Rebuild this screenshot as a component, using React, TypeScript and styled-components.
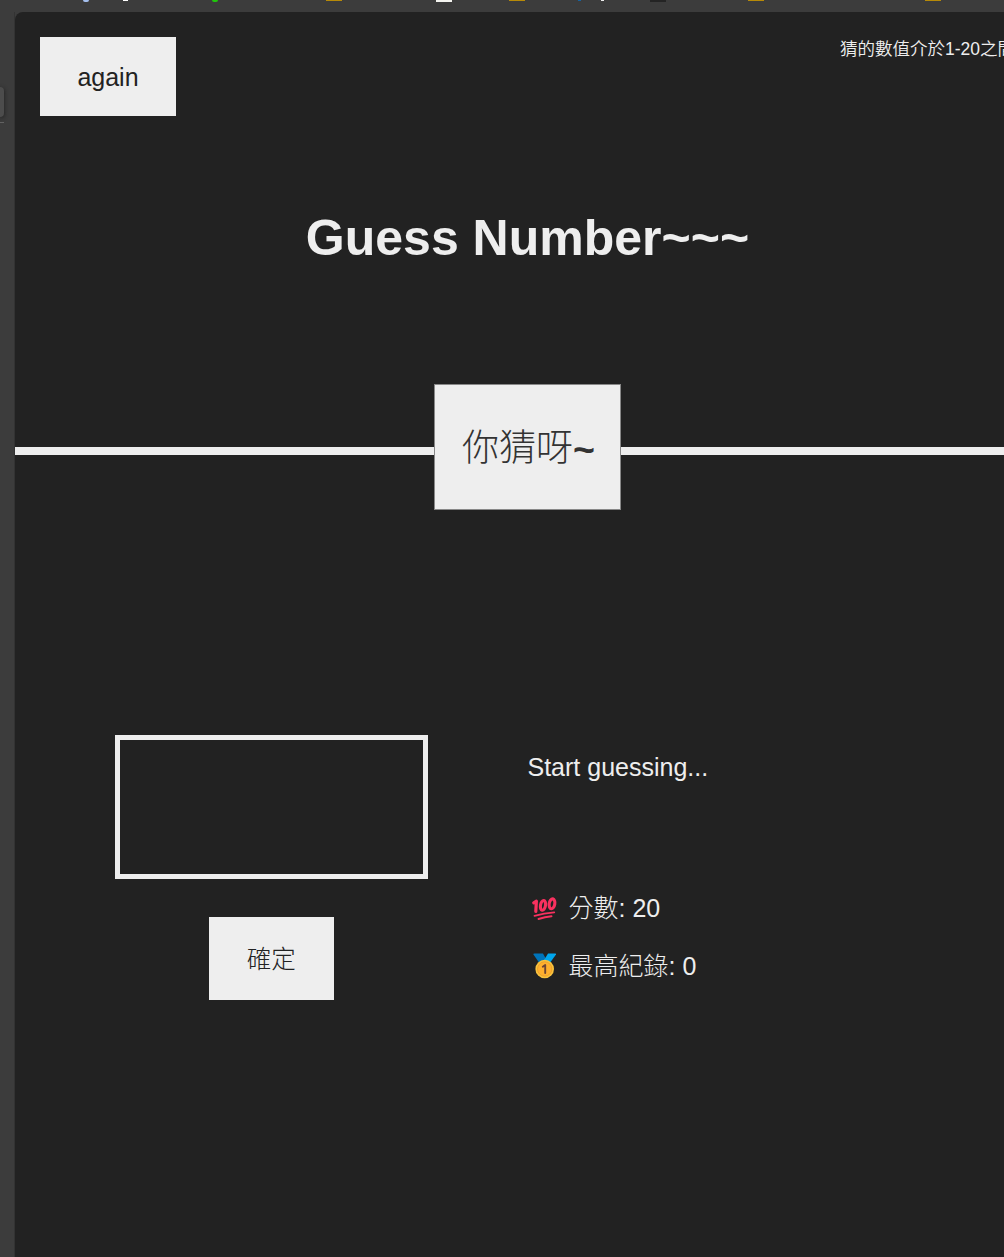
import React, { useState } from 'react';
import styled, { createGlobalStyle } from 'styled-components';

const GlobalStyle = createGlobalStyle`
  *, *::before, *::after { box-sizing: border-box; margin: 0; padding: 0; }
  html, body { overflow: hidden; background: #3c3c3c; }
  body { font-family: "Liberation Sans", Arial, "Noto Sans CJK TC", sans-serif; color: #eee; }
`;

const Browser = styled.div`
  display: grid;
  grid-template: 12px 1245px / 15px 1025px;
  width: 1004px;
  height: 1257px;
  overflow: hidden;
`;

const Bookmarks = styled.div`
  grid-column: 1 / -1;
  display: flex;
  align-items: flex-start;
`;

const Bookmark = styled.i<{ $gap: number; $w: number; $h: number; $color: string; $round?: boolean }>`
  flex: none;
  margin-left: ${(p) => p.$gap}px;
  width: ${(p) => p.$w}px;
  height: ${(p) => p.$h}px;
  background: ${(p) => p.$color};
  border-radius: ${(p) => (p.$round ? '0 0 3px 3px' : '0')};
`;

const Rail = styled.div`
  padding-top: 75px;
  border-right: 1px solid #333;
`;

const RailTab = styled.div`
  width: 4px;
  height: 30px;
  background: #4c4c4c;
  border-radius: 0 5px 5px 0;
  box-shadow: 0 1px 4px #1c1c1c;
`;

const RailLine = styled.div`
  width: 4px;
  height: 1px;
  margin-top: 5px;
  background: #626262;
`;

const Page = styled.div`
  display: flex;
  flex-direction: column;
  background: #222;
  border-top-left-radius: 8px;
`;

const Header = styled.header`
  display: flex;
  flex-direction: column;
  height: 443px;
  padding: 25px 25px 0;
  border-bottom: 8px solid #eee;
`;

const TopRow = styled.div`
  display: flex;
  justify-content: space-between;
  align-items: flex-start;
`;

const Button = styled.button<{ $w: number; $h: number; $pad: string; $size?: number }>`
  width: ${(p) => p.$w}px;
  height: ${(p) => p.$h}px;
  padding: ${(p) => p.$pad};
  border: none;
  background: #eee;
  color: #222;
  font-family: inherit;
  font-size: ${(p) => p.$size ?? 25}px;
  font-weight: 300;
  cursor: pointer;
`;

const Range = styled.p`
  padding-top: 2px;
  font-size: 17.5px;
  font-weight: 350;
  line-height: 20px;
  white-space: nowrap;
`;

const Title = styled.h1`
  margin-top: 93px;
  font-size: 50px;
  line-height: 58px;
  text-align: center;
`;

const Secret = styled.div`
  flex: none;
  align-self: center;
  display: flex;
  align-items: center;
  justify-content: center;
  width: 187px;
  height: 126px;
  margin-top: 117px;
  padding: 4px 0 0 2px;
  border: 1px solid #888;
  background: #eee;
  color: #333;
  font-size: 37px;
  font-weight: 300;
  line-height: 44px;
  b { font-size: 37.5px; font-weight: 700; }
`;

const Main = styled.main`
  display: grid;
  grid-template-columns: 1fr 1fr;
  padding-top: 280px;
`;

const Form = styled.section`
  display: flex;
  flex-direction: column;
  align-items: center;
  gap: 38px;
`;

const GuessInput = styled.input`
  width: 313px;
  height: 144px;
  border: 5px solid #eee;
  background: #222;
  color: #eee;
  font-family: inherit;
  font-size: 62px;
  text-align: center;
  outline: none;
`;

const Info = styled.section`
  display: flex;
  flex-direction: column;
  font-size: 25px;
  font-weight: 300;
  line-height: 30px;
`;

const Message = styled.p`
  padding-top: 17px;
  margin-bottom: 111px;
`;

const Stat = styled.p`
  display: flex;
  align-items: center;
  gap: 8px;
  margin-bottom: 28px;
  svg { flex: none; }
`;

const Hundred = () => (
  <svg width="33" height="30" viewBox="0 0 33 30" fill="none" stroke="#f8315f" strokeLinecap="round">
    <path d="M5.7 9.8 8.4 8.2 7.8 18.3" strokeWidth="3.2" strokeLinejoin="round" />
    <ellipse cx="15" cy="12.4" rx="2.5" ry="4.9" strokeWidth="3.1" transform="rotate(10 15 12.4)" />
    <ellipse cx="24" cy="10.8" rx="2.8" ry="5" strokeWidth="3.1" transform="rotate(10 24 10.8)" />
    <path d="M6.5 22.8Q16 20 26.2 19.4M10.5 26Q17 23.6 23.5 23.2" strokeWidth="1.9" />
  </svg>
);

const Medal = () => (
  <svg width="33" height="30" viewBox="0 0 33 30">
    <path d="M5.5 3.5Q5 2.5 6.5 2.5H15l5 9-7 3Z" fill="#0074ba" />
    <path d="M28 3.5Q28.5 2.5 27 2.5H20l-6 10 6 2Z" fill="#00a6ed" />
    <circle cx="16.7" cy="18" r="9.3" fill="#f9c23c" />
    <circle cx="16.7" cy="18" r="7.2" fill="#ffb02e" stroke="#e79a28" strokeWidth=".8" />
    <path d="m14.8 15.7 2.4-1.7V22" fill="none" stroke="#6d4534" strokeWidth="1.9" strokeLinejoin="round" strokeLinecap="round" />
  </svg>
);

const bookmarks = [
  { $gap: 83, $w: 6, $h: 2, $color: '#a4bfee', $round: true },
  { $gap: 34, $w: 5, $h: 1, $color: '#fff' },
  { $gap: 84, $w: 6, $h: 2, $color: '#1fc60b', $round: true },
  { $gap: 108, $w: 16, $h: 1, $color: '#b78a08' },
  { $gap: 94, $w: 16, $h: 2, $color: '#f4f4f0' },
  { $gap: 57, $w: 16, $h: 1, $color: '#b78a08' },
  { $gap: 53, $w: 3, $h: 1, $color: '#1763a0' },
  { $gap: 20, $w: 3, $h: 1, $color: '#eee' },
  { $gap: 46, $w: 16, $h: 2, $color: '#242424' },
  { $gap: 82, $w: 16, $h: 1, $color: '#b78a08' },
  { $gap: 161, $w: 16, $h: 1, $color: '#b78a08' },
];

export default function App() {
  const [guess, setGuess] = useState('');
  return (
    <>
      <GlobalStyle />
      <Browser>
        <Bookmarks>
          {bookmarks.map((b, i) => <Bookmark key={i} {...b} />)}
        </Bookmarks>
        <Rail>
          <RailTab />
          <RailLine />
        </Rail>
        <Page>
          <Header>
            <TopRow>
              <Button $w={136} $h={79} $pad="1px 0 0" onClick={() => setGuess('')}>again</Button>
              <Range>猜的數值介於1-20之間</Range>
            </TopRow>
            <Title>Guess Number~~~</Title>
            <Secret>你猜呀<b>~</b></Secret>
          </Header>
          <Main>
            <Form>
              <GuessInput value={guess} onChange={(e) => setGuess(e.target.value)} />
              <Button $w={125} $h={83} $pad="0 0 3px" $size={24.5}>確定</Button>
            </Form>
            <Info>
              <Message>Start guessing...</Message>
              <Stat><Hundred />分數: 20</Stat>
              <Stat><Medal />最高紀錄: 0</Stat>
            </Info>
          </Main>
        </Page>
      </Browser>
    </>
  );
}
